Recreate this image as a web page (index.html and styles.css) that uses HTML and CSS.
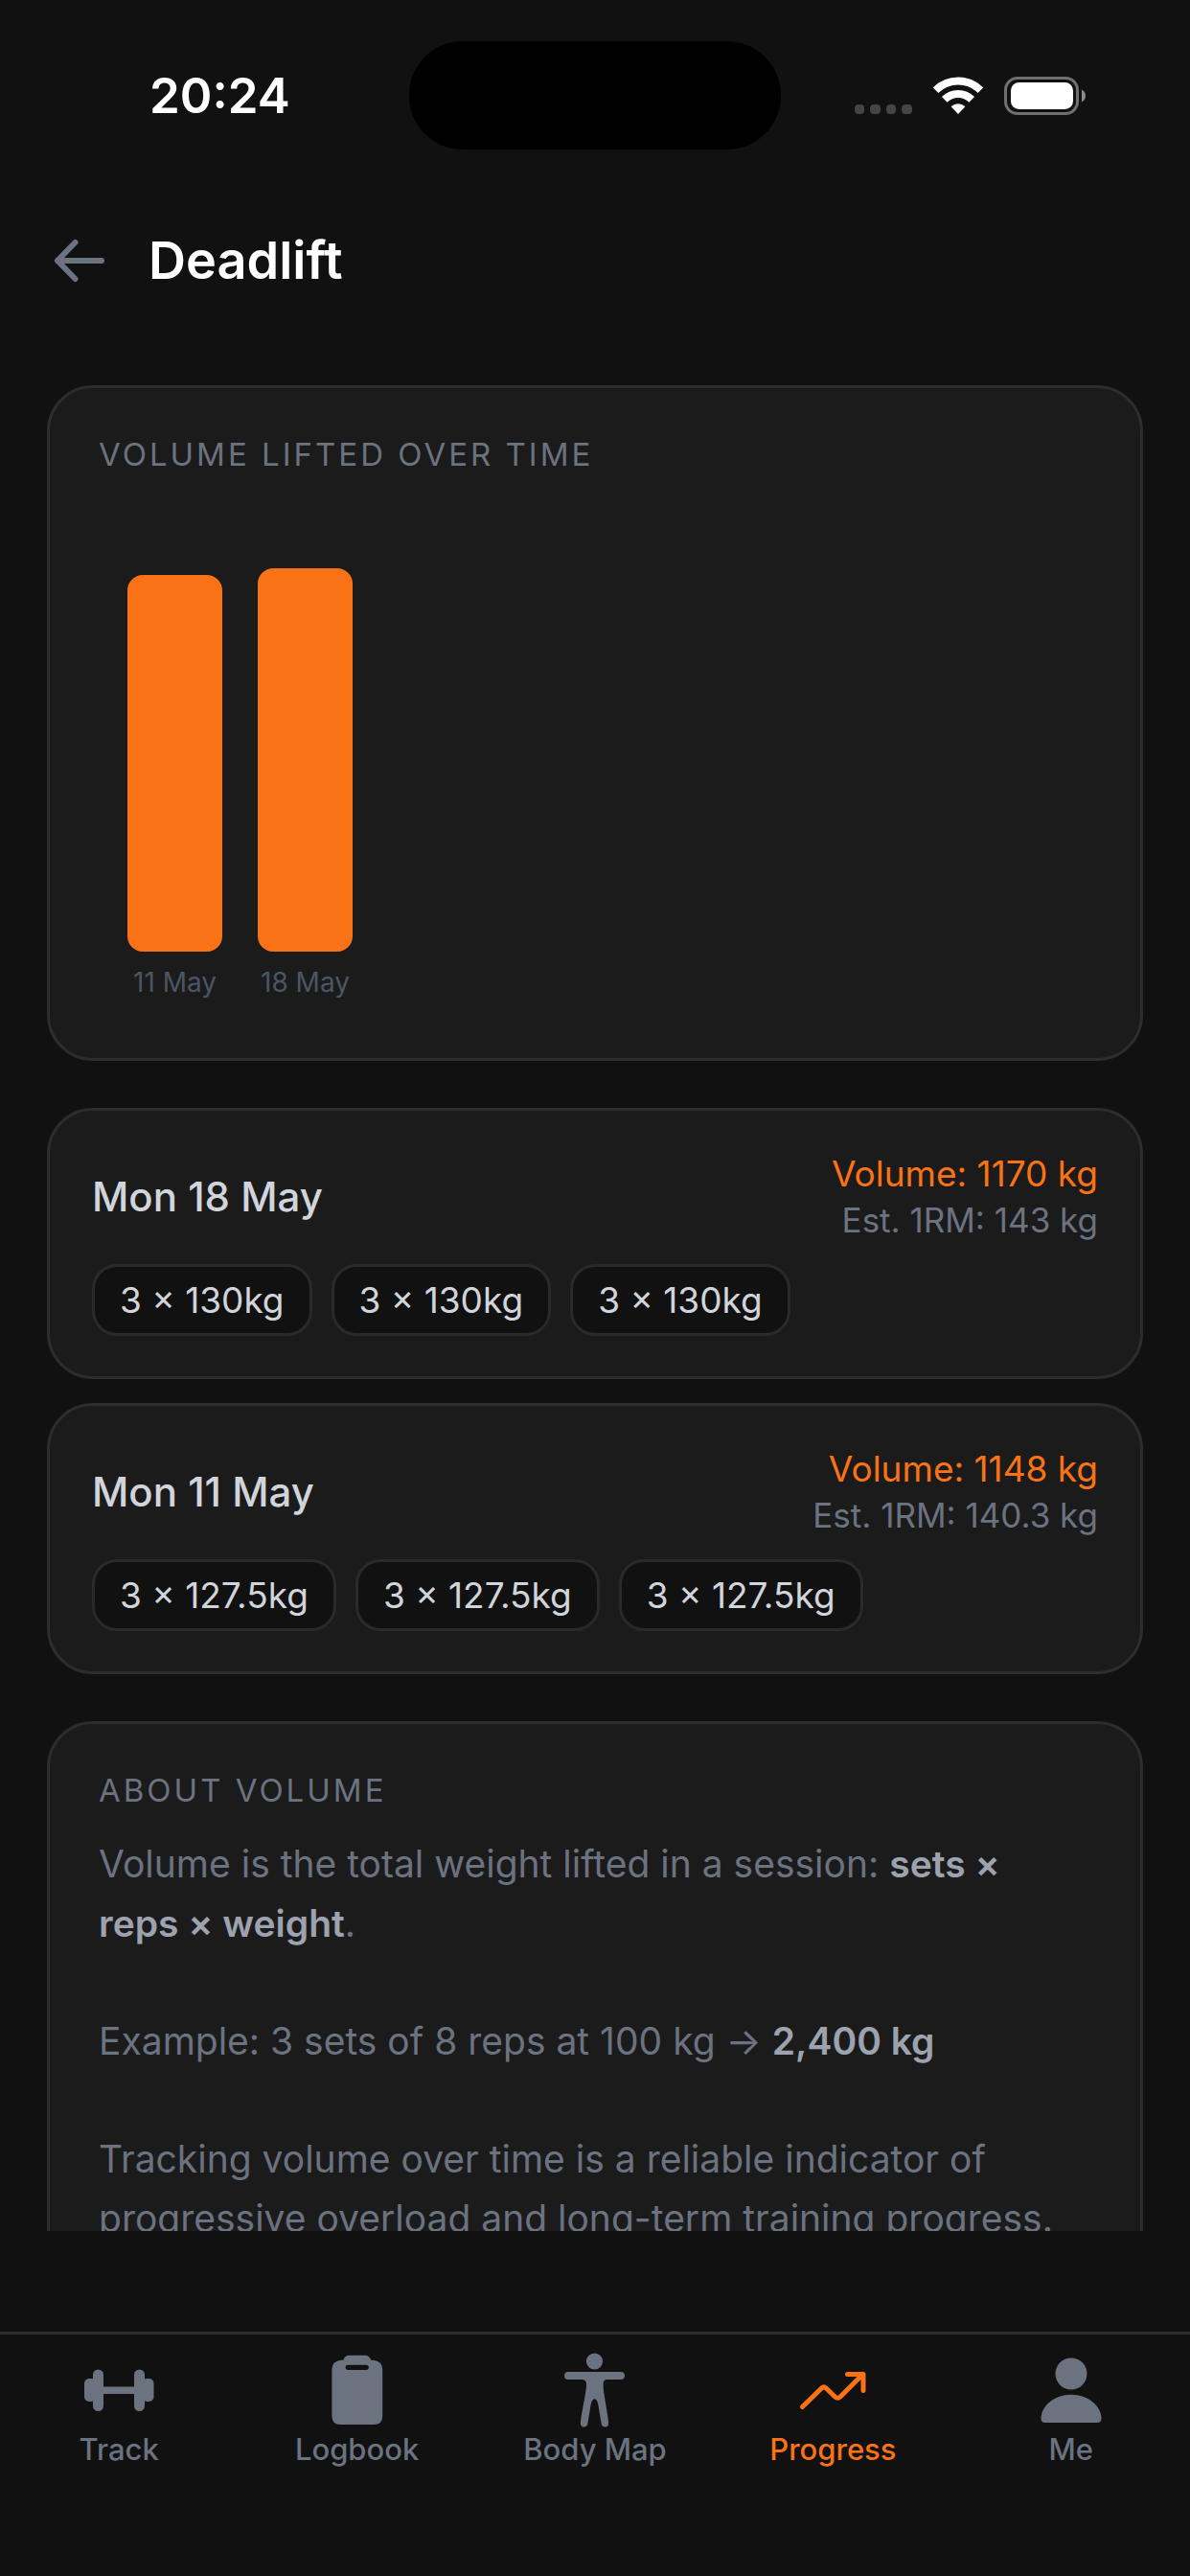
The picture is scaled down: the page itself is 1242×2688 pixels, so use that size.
FILE: index.html
```html
<!DOCTYPE html>
<html lang="en">
<head>
<meta charset="utf-8">
<meta name="viewport" content="width=device-width, initial-scale=1">
<title>Deadlift</title>
<link rel="stylesheet" href="styles.css">
</head>
<body>
<div class="app">
  <div class="status">
    <span class="status-time">20:24</span>
    <span class="island"></span>
    <span class="status-icons">
      <svg class="signal" viewBox="0 0 60 40" aria-hidden="true"><g fill="#454545"><rect x="0" y="29" width="10" height="10" rx="4"/><rect x="16" y="29" width="11" height="10" rx="4"/><rect x="33" y="29" width="10" height="10" rx="4"/><rect x="49" y="29" width="11" height="10" rx="4"/></g></svg>
      <svg class="wifi" viewBox="0 0 52 40" aria-hidden="true"><g fill="none" stroke="#fff" stroke-width="8"><path d="M2.600 14.300A33 33 0 0 1 49.400 14.300"/><path d="M11.800 23.900A20 20 0 0 1 40.200 23.900"/></g><path d="M26 39 18.600 31.200A10.500 10.500 0 0 1 33.400 31.200Z" fill="#fff"/></svg>
      <svg class="battery" viewBox="0 0 86 40" aria-hidden="true"><rect x="1.500" y="1.500" width="75" height="37" rx="12.500" fill="none" stroke="#707070" stroke-width="3"/><rect x="7" y="6" width="65" height="28" rx="8.500" fill="#fff"/><path d="M81 13.500C86.300 16 86.300 24 81 26.500Z" fill="#8a8a8a"/></svg>
    </span>
  </div>

  <header class="header">
    <button class="back" type="button" aria-label="Back">
      <svg viewBox="0 0 60 60" aria-hidden="true"><path d="M52 30H6M24.500 11 6 30 24.500 49" fill="none" stroke="#6b7280" stroke-width="6" stroke-linecap="round" stroke-linejoin="round"/></svg>
    </button>
    <h1>Deadlift</h1>
  </header>

  <main class="content">
    <section class="card">
      <h2>VOLUME LIFTED OVER TIME</h2>
      <div class="chart">
        <div class="column"><div class="track"><div class="bar" style="height:98.300%"></div></div><span>11 May</span></div>
        <div class="column"><div class="track"><div class="bar" style="height:100%"></div></div><span>18 May</span></div>
      </div>
    </section>

    <div class="sessions">
      <article class="card session">
        <div class="session-head">
          <h3>Mon 18 May</h3>
          <div class="totals"><p class="volume">Volume: 1170 kg</p><p class="max">Est. 1RM: 143 kg</p></div>
        </div>
        <ul class="sets"><li>3 × 130kg</li><li>3 × 130kg</li><li>3 × 130kg</li></ul>
      </article>
      <article class="card session">
        <div class="session-head">
          <h3>Mon 11 May</h3>
          <div class="totals"><p class="volume">Volume: 1148 kg</p><p class="max">Est. 1RM: 140.3 kg</p></div>
        </div>
        <ul class="sets"><li>3 × 127.5kg</li><li>3 × 127.5kg</li><li>3 × 127.5kg</li></ul>
      </article>
    </div>

    <section class="card">
      <h2>ABOUT VOLUME</h2>
      <div class="about">
        <p>Volume is the total weight lifted in a session: <strong>sets × reps × weight</strong>.</p>
        <p>Example: 3 sets of 8 reps at 100 kg → <strong>2,400 kg</strong></p>
        <p>Tracking volume over time is a reliable indicator of progressive overload and long-term training progress.</p>
      </div>
    </section>
  </main>

  <nav class="tabs">
    <a href="#track">
      <svg viewBox="0 0 78 78" fill="currentColor" aria-hidden="true"><rect x="3" y="27" width="12" height="24" rx="5"/><rect x="12" y="17.500" width="11" height="43.500" rx="5.500"/><rect x="20" y="35.500" width="38" height="7.500"/><rect x="55" y="17.500" width="11" height="43.500" rx="5.500"/><rect x="63.500" y="27" width="12" height="24" rx="5"/></svg>
      <span>Track</span>
    </a>
    <a href="#logbook">
      <svg viewBox="0 0 78 78" fill="currentColor" fill-rule="evenodd" aria-hidden="true"><path d="M24.300 7.700Q26 2.700 30.500 2.700H47Q51.500 2.700 53.200 7.700H55.500Q65.200 8.500 65.200 18V66Q65.200 75 56.200 75H21.400Q12.400 75 12.400 66V18Q12.400 8.500 22 7.700ZM29.200 12.700A2.600 2.600 0 0 0 29.200 17.900H48.200A2.600 2.600 0 0 0 48.200 12.700Z"/></svg>
      <span>Logbook</span>
    </a>
    <a href="#body">
      <svg viewBox="0 0 78 78" fill="currentColor" aria-hidden="true"><circle cx="38.500" cy="9" r="8.600"/><path d="M11 20H66A4 4 0 0 1 66 28H51Q47.600 28.500 47.600 33C47.600 42 51.500 58 53.200 73Q53.300 77.300 49.800 77.500 46.400 77.600 45.600 74L42.500 55Q41.300 48.300 38.500 48.300T34.500 55L31.400 74Q30.600 77.600 27.200 77.500 23.700 77.300 23.800 73C25.500 58 30 42 30 33Q30 28.500 26 28H11A4 4 0 0 1 11 20Z"/></svg>
      <span>Body Map</span>
    </a>
    <a class="active" href="#progress" aria-current="page">
      <svg viewBox="0 0 78 78" fill="none" stroke="currentColor" stroke-width="5" stroke-linecap="round" stroke-linejoin="round" aria-hidden="true"><path d="M7.500 56.500 27.500 37Q30 34.800 32.200 37L41.500 46Q44.300 48.500 47 46L70.500 22.500M54.500 22.500H71V39.500"/></svg>
      <span>Progress</span>
    </a>
    <a href="#me">
      <svg viewBox="0 0 78 78" fill="currentColor" aria-hidden="true"><circle cx="39" cy="22" r="16.500"/><path d="M39 43.700C57 43.700 70.500 56 70.500 68.500Q70.500 73 66 73H12Q7.500 73 7.500 68.500C7.500 56 21 43.700 39 43.700Z"/></svg>
      <span>Me</span>
    </a>
  </nav>
</div>
</body>
</html>
```
FILE: styles.css
```css
* {
  box-sizing: border-box;
}

body,
h1,
h2,
h3,
p,
ul {
  margin: 0;
  padding: 0;
}

body {
  background: #111;
  color: #fff;
  font-family: Inter, "Liberation Sans", sans-serif;
}

.app {
  display: flex;
  flex-direction: column;
  height: 100vh;
}

/* Status bar */
.status {
  display: grid;
  grid-template-columns: 1fr 388px 1fr;
  align-items: center;
  padding-top: 43px;
}

.status-time {
  padding-left: 156px;
  font-size: 51px;
  line-height: 60px;
  font-weight: 600;
}

.island {
  height: 113px;
  border-radius: 56px;
  background: #000;
}

.status-icons {
  display: flex;
  justify-content: flex-end;
  gap: 22px;
  padding-right: 108px;
}

.status-icons svg {
  height: 40px;
}

.signal {
  width: 60px;
}

.wifi {
  width: 52px;
}

.battery {
  width: 86px;
}

/* Screen header */
.header {
  display: flex;
  align-items: center;
  gap: 41px;
  padding: 84px 54px 98px;
}

.back {
  width: 60px;
  height: 60px;
  padding: 0;
  border: 0;
  background: none;
}

.back svg {
  display: block;
}

h1 {
  font-size: 54px;
  line-height: 64px;
  font-weight: 600;
}

/* Scrolling area */
.content {
  flex: 1;
  min-height: 0;
  overflow: hidden;
  display: flex;
  flex-direction: column;
  gap: 49px;
  margin-bottom: 105px;
  padding: 0 49px;
}

.card {
  flex-shrink: 0;
  padding: 49px 51px;
  border: 3px solid #2d2d2d;
  border-radius: 48px;
  background: #1b1b1b;
}

h2 {
  color: #6b7280;
  font-size: 33px;
  line-height: 41px;
  font-weight: 400;
  letter-spacing: 3px;
}

.chart {
  display: flex;
  gap: 37px;
  padding: 98px 30px 13px;
}

.column {
  display: flex;
  flex-direction: column;
  align-items: center;
  gap: 16px;
  width: 99px;
  color: #4b5563;
  font-size: 28px;
  line-height: 33px;
  white-space: nowrap;
}

.track {
  display: flex;
  align-items: flex-end;
  width: 100%;
  height: 400px;
}

.bar {
  width: 100%;
  border-radius: 16px;
  background: #f97316;
}

/* Sessions */
.sessions {
  flex-shrink: 0;
  display: flex;
  flex-direction: column;
  gap: 25px;
}

.session {
  display: flex;
  flex-direction: column;
  gap: 22px;
  padding: 42px 44px;
}

.session-head {
  display: flex;
  justify-content: space-between;
  align-items: center;
}

h3 {
  color: #d1d5db;
  font-size: 42px;
  line-height: 52px;
  font-weight: 500;
}

.totals {
  line-height: 48px;
  text-align: right;
}

.volume {
  color: #f97316;
  font-size: 37px;
}

.max {
  color: #6b7280;
  font-size: 35px;
}

.sets {
  display: flex;
  flex-wrap: wrap;
  gap: 20px;
  list-style: none;
}

.sets li {
  padding: 12px 26px;
  border: 3px solid #2a2a2a;
  border-radius: 26px;
  background: #111;
  color: #d1d5db;
  font-size: 37px;
  line-height: 45px;
}

/* Explanation */
.about {
  display: flex;
  flex-direction: column;
  gap: 61px;
  margin-top: 25px;
  padding-right: 16px;
  color: #6b7280;
  font-size: 39px;
  line-height: 62px;
}

.about strong {
  color: #9ca3af;
  font-weight: 600;
}

/* Tab bar */
.tabs {
  flex-shrink: 0;
  display: grid;
  grid-template-columns: repeat(5, 1fr);
  padding: 19px 0 111px;
  border-top: 3px solid #2d2d2d;
}

.tabs a {
  display: flex;
  flex-direction: column;
  align-items: center;
  gap: 2px;
  color: #6b7280;
  font-size: 31px;
  line-height: 42px;
  font-weight: 500;
  text-decoration: none;
}

.tabs svg {
  width: 78px;
  height: 78px;
}

.tabs .active {
  color: #f97316;
}
```
